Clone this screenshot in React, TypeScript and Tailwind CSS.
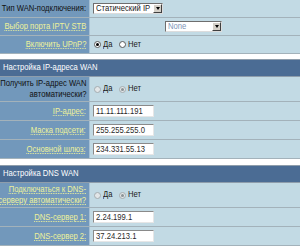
import React from 'react';

const font = { fontFamily: '"Liberation Sans", Arial, sans-serif' };

// the original page is rendered with a tall, narrow face: squeeze the text horizontally
function Txt({ children, right }: { children: React.ReactNode; right?: boolean }) {
    return (
        <span className={`inline-block whitespace-nowrap scale-x-[0.85] ${right ? 'origin-right' : 'origin-left'}`}>
            {children}
        </span>
    );
}

function Radio({ checked, disabled }: { checked?: boolean; disabled?: boolean }) {
    return (
        <span
            className={`inline-flex shrink-0 items-center justify-center w-[7px] h-[7px] rounded-full border ${
                disabled ? 'border-[#a4acb0] bg-[#e2e6e8]' : 'border-[#5a5a5a] bg-white'
            }`}
        >
            {checked && (
                <span className={`w-[3px] h-[3px] rounded-full ${disabled ? 'bg-[#8a9296]' : 'bg-black'}`} />
            )}
        </span>
    );
}

function YesNo({ yes, disabled }: { yes: boolean; disabled?: boolean }) {
    return (
        <div className="flex items-center pl-[1px] text-[9px] text-[#1a1a1a]">
            <Radio checked={yes} disabled={disabled} />
            <span className="w-[18px] pl-[2px]">
                <Txt>Да</Txt>
            </span>
            <Radio checked={!yes} disabled={disabled} />
            <span className="pl-[2px]">
                <Txt>Нет</Txt>
            </span>
        </div>
    );
}

function Arrow() {
    return (
        <span className="flex shrink-0 items-center justify-center w-[9px] h-[9px] bg-[#d4d0c8] border border-t-white border-l-white border-r-[#404040] border-b-[#404040]">
            <span className="w-0 h-0 border-l-[2px] border-r-[2px] border-t-[3px] border-l-transparent border-r-transparent border-t-black" />
        </span>
    );
}

function Select({ value, width, muted }: { value: string; width: string; muted?: boolean }) {
    return (
        <div
            className={`${width} h-[11px] flex items-center bg-white border border-t-[#6e6e6e] border-l-[#6e6e6e] border-r-[#dcdcdc] border-b-[#dcdcdc] pl-[2px] text-[9px] leading-none ${
                muted ? 'text-[#7d95b8]' : 'text-[#1a1a1a]'
            }`}
        >
            <span className="flex-1 min-w-0 overflow-hidden">
                <Txt>{value}</Txt>
            </span>
            <Arrow />
        </div>
    );
}

function Input({ value }: { value: string }) {
    return (
        <div className="w-[61px] h-[12px] flex items-center bg-white border border-t-[#8a8a8a] border-l-[#8a8a8a] border-r-[#e6e6e6] border-b-[#e6e6e6] pl-[2px] text-[9px] leading-none text-[#2a2a2a] overflow-hidden">
            <Txt>{value}</Txt>
        </div>
    );
}

function Row({
    label,
    link,
    h,
    children,
}: {
    label: React.ReactNode;
    link?: boolean;
    h: string;
    children?: React.ReactNode;
}) {
    return (
        <div className={`flex ${h} border-b border-[#a3b2ba]`}>
            <div
                className={`w-[90px] shrink-0 flex items-center justify-end pr-[3px] bg-[#7298bb] border-r border-[#a6c0d4] text-[9px] leading-[11px] text-right ${
                    link ? 'text-[#eef29a]' : 'text-[#111]'
                }`}
            >
                <span className={`inline-block whitespace-nowrap scale-x-[0.85] origin-right ${link ? 'underline decoration-dotted underline-offset-[1px]' : ''}`}>
                    {label}
                </span>
            </div>
            <div className="flex-1 flex items-center bg-[#c2dae4] pl-[3px]">{children}</div>
        </div>
    );
}

function Header({ title }: { title: string }) {
    return (
        <div className="h-[18px] flex items-center bg-[#4b6c94] border-y border-[#8e9dab] pl-[3px] text-[9px] text-white">
            <Txt>{title}</Txt>
        </div>
    );
}

export default function App() {
    return (
        <div className="w-[300px] h-[246px] overflow-hidden bg-white" style={font}>
            <Row label="Тип WAN-подключения:" h="h-[18px]">
                <Select value="Статический IP" width="w-[70px]" />
            </Row>
            <Row label="Выбор порта IPTV STB" link h="h-[18px]">
                <div className="pl-[72px]">
                    <Select value="None" width="w-[57px]" muted />
                </div>
            </Row>
            <Row label="Включить UPnP?" link h="h-[18px]">
                <YesNo yes />
            </Row>
            <div className="h-[5px]" />
            <Header title="Настройка IP-адреса WAN" />
            <Row
                label={
                    <>
                        Получить IP-адрес WAN
                        <br />
                        автоматически?
                    </>
                }
                h="h-[25px]"
            >
                <YesNo yes={false} disabled />
            </Row>
            <Row label="IP-адрес:" link h="h-[19px]">
                <Input value="11.11.111.191" />
            </Row>
            <Row label="Маска подсети:" link h="h-[19px]">
                <Input value="255.255.255.0" />
            </Row>
            <Row label="Основной шлюз:" link h="h-[19px]">
                <Input value="234.331.55.13" />
            </Row>
            <div className="h-[6px]" />
            <Header title="Настройка DNS WAN" />
            <Row
                label={
                    <>
                        Подключаться к DNS-
                        <br />
                        серверу автоматически?
                    </>
                }
                link
                h="h-[25px]"
            >
                <YesNo yes={false} disabled />
            </Row>
            <Row label="DNS-сервер 1:" link h="h-[19px]">
                <Input value="2.24.199.1" />
            </Row>
            <Row label="DNS-сервер 2:" link h="h-[19px]">
                <Input value="37.24.213.1" />
            </Row>
        </div>
    );
}
